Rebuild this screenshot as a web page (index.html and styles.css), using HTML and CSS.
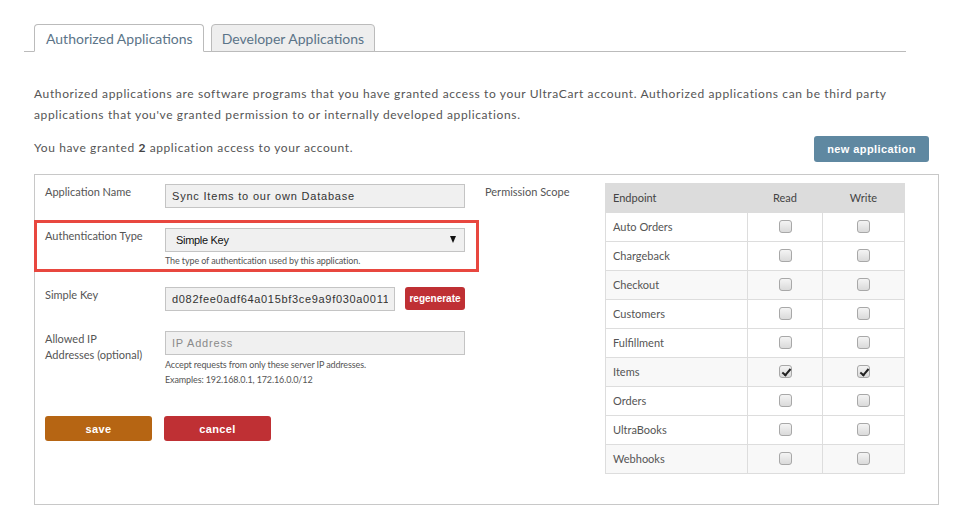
FILE: index.html
```html
<!DOCTYPE html>
<html lang="en">

<head>
    <meta charset="UTF-8">
    <title>Authorized Applications</title>
    <link rel="stylesheet" href="styles.css">
</head>

<body>
    <ul class="tabs">
        <li class="tab active">Authorized Applications</li>
        <li class="tab">Developer Applications</li>
    </ul>

    <div class="content">
        <p class="intro">Authorized applications are software programs that you have granted access to your UltraCart account. Authorized applications can be third party applications that you've granted permission to or internally developed applications.</p>

        <div class="granted-row">
            <p>You have granted <b>2</b> application access to your account.</p>
            <button class="btn btn-blue">new application</button>
        </div>

        <div class="app-box">
            <div class="col">
                <div class="form-row">
                    <label>Application Name</label>
                    <div class="field">
                        <input type="text" class="text-input" value="Sync Items to our own Database">
                    </div>
                </div>

                <div class="form-row highlight">
                    <label>Authentication Type</label>
                    <div class="field">
                        <div class="select-wrap">
                            <select class="select-input">
                                <option>Simple Key</option>
                            </select>
                        </div>
                        <div class="help">The type of authentication used by this application.</div>
                    </div>
                </div>

                <div class="form-row">
                    <label>Simple Key</label>
                    <div class="field key-field">
                        <input type="text" class="text-input key-input" value="d082fee0adf64a015bf3ce9a9f030a0011">
                        <button class="btn btn-red btn-small">regenerate</button>
                    </div>
                </div>

                <div class="form-row">
                    <label>Allowed IP<br>Addresses (optional)</label>
                    <div class="field">
                        <input type="text" class="text-input" placeholder="IP Address">
                        <div class="help">Accept requests from only these server IP addresses.<br>Examples: 192.168.0.1, 172.16.0.0/12</div>
                    </div>
                </div>

                <div class="actions">
                    <button class="btn btn-orange btn-wide">save</button>
                    <button class="btn btn-red btn-wide">cancel</button>
                </div>
            </div>

            <div class="col">
                <div class="form-row">
                    <label>Permission Scope</label>
                    <table class="scope-table">
                        <thead>
                            <tr><th>Endpoint</th><th class="center">Read</th><th class="center">Write</th></tr>
                        </thead>
                        <tbody id="scope-body"></tbody>
                    </table>
                </div>
            </div>
        </div>
    </div>

    <script>
        const endpoints = [
            ['Auto Orders', false, false],
            ['Chargeback', false, false],
            ['Checkout', false, false],
            ['Customers', false, false],
            ['Fulfillment', false, false],
            ['Items', true, true],
            ['Orders', false, false],
            ['UltraBooks', false, false],
            ['Webhooks', false, false]
        ];

        const body = document.getElementById('scope-body');
        endpoints.forEach(([name, read, write]) => {
            const row = document.createElement('tr');
            row.innerHTML = `<td>${name}</td>` +
                `<td class="center"><input type="checkbox" ${read ? 'checked' : ''}></td>` +
                `<td class="center"><input type="checkbox" ${write ? 'checked' : ''}></td>`;
            body.appendChild(row);
        });
    </script>
</body>

</html>
```

FILE: styles.css
```css
body {
    font-family: Lato, "Open Sans", sans-serif;
    background-color: #fff;
    color: #555;
    margin: 0;
    padding: 0;
}

.tabs {
    display: flex;
    list-style: none;
    margin: 24px 48px 0 24px;
    padding: 0 0 0 10px;
    border-bottom: 1px solid #bbb;
}

.tab {
    font-size: 14px;
    line-height: 17px;
    padding: 5px 10px 4px;
    margin-right: 7px;
    margin-bottom: -1px;
    border: 1px solid #bbb;
    border-radius: 4px 4px 0 0;
    background-color: #eee;
    color: #5b7488;
}

.tab.active {
    background-color: #fff;
    border-bottom-color: #fff;
    padding-left: 11px;
    padding-right: 10px;
}

.content {
    padding: 0 15px 0 34px;
}

.intro {
    font-size: 12px;
    line-height: 21px;
    letter-spacing: 0.63px;
    margin: 31px 0 10px;
}

.granted-row {
    display: flex;
    justify-content: space-between;
    align-items: center;
    margin-top: 11px;
    margin-bottom: 12px;
    padding-right: 10px;
}

.granted-row p {
    margin: 0;
    font-size: 12px;
    letter-spacing: 0.6px;
    padding-bottom: 4px;
}

.granted-row b {
    color: #444;
}

.btn {
    font-family: "Liberation Sans", Arial, sans-serif;
    font-weight: bold;
    font-size: 11px;
    letter-spacing: 0.4px;
    color: #fff;
    border: none;
    border-radius: 3px;
    cursor: pointer;
    padding: 0;
}

.btn-blue {
    background-color: #5f88a1;
    width: 115px;
    height: 26px;
}

.btn-red {
    background-color: #bf3034;
}

.btn-orange {
    background-color: #b66513;
}

.btn-small {
    font-size: 10px;
    letter-spacing: 0;
    width: 60px;
    height: 23px;
}

.btn-wide {
    width: 107px;
    height: 25px;
}

.app-box {
    display: flex;
    gap: 20px;
    border: 1px solid #c8c8c8;
    padding: 9px 10px 30px;
}

.col {
    width: 420px;
}

.form-row {
    display: flex;
    margin-bottom: 20px;
}

.col .form-row:last-child {
    margin-bottom: 0;
}

.form-row label {
    width: 120px;
    flex-shrink: 0;
    font-size: 11px;
    line-height: 16px;
}

.field {
    width: 300px;
}

.form-row.highlight {
    border: 3px solid #e8473f;
    margin: -8px -14px 15px -11px;
    padding: 5px 11px 2px 8px;
}

.text-input,
.select-input {
    display: block;
    box-sizing: border-box;
    width: 100%;
    height: 24px;
    margin: 0;
    padding: 0 6px;
    background-color: #f0f0f0;
    border: 1px solid #c4c4c4;
    font-family: "Liberation Sans", Arial, sans-serif;
    font-size: 11px;
    letter-spacing: 0.8px;
    color: #333;
    outline: none;
}

.text-input::placeholder {
    color: #8a8a8a;
}

.select-wrap {
    position: relative;
}

.select-input {
    appearance: none;
    padding-left: 10px;
    letter-spacing: -0.3px;
    color: #111;
}

.select-wrap::after {
    content: '';
    position: absolute;
    right: 9px;
    top: 8px;
    border-left: 3.5px solid transparent;
    border-right: 3.5px solid transparent;
    border-top: 7px solid #111;
}

.help {
    font-size: 9px;
    line-height: 13px;
    letter-spacing: -0.12px;
    margin-top: 2px;
}

.form-row .field .text-input + .help {
    line-height: 15px;
}

.key-field {
    display: flex;
    justify-content: space-between;
    align-items: flex-start;
}

.key-input {
    width: 230px;
    letter-spacing: 0.68px;
}

.actions {
    display: flex;
    gap: 12px;
    margin-top: 29px;
}

.scope-table {
    width: 300px;
    margin-top: -1px;
    border-collapse: collapse;
    font-size: 11px;
}

.scope-table th,
.scope-table td {
    height: 29px;
    box-sizing: border-box;
    padding: 0 7px 2px;
    border: 1px solid #ddd;
    text-align: left;
}

.scope-table th {
    background-color: #dcdcdc;
    font-weight: normal;
    color: #444;
    border-color: #dcdcdc;
}

.scope-table th:first-child,
.scope-table td:first-child {
    width: 142px;
}

.scope-table th:nth-child(2) {
    width: 75px;
}

.scope-table .center {
    text-align: center;
}

.scope-table tbody tr:nth-child(3n) {
    background-color: #f8f8f8;
}

input[type="checkbox"] {
    appearance: none;
    width: 13px;
    height: 13px;
    margin: 0;
    vertical-align: middle;
    border: 1px solid #a8a8a8;
    border-radius: 3px;
    background: linear-gradient(#f4f4f4, #dadada);
    position: relative;
    cursor: pointer;
}

input[type="checkbox"]:checked::before {
    content: '';
    position: absolute;
    top: 1px;
    left: 4px;
    width: 3px;
    height: 7px;
    border: solid #222;
    border-width: 0 2px 2px 0;
    transform: rotate(40deg);
}
```
